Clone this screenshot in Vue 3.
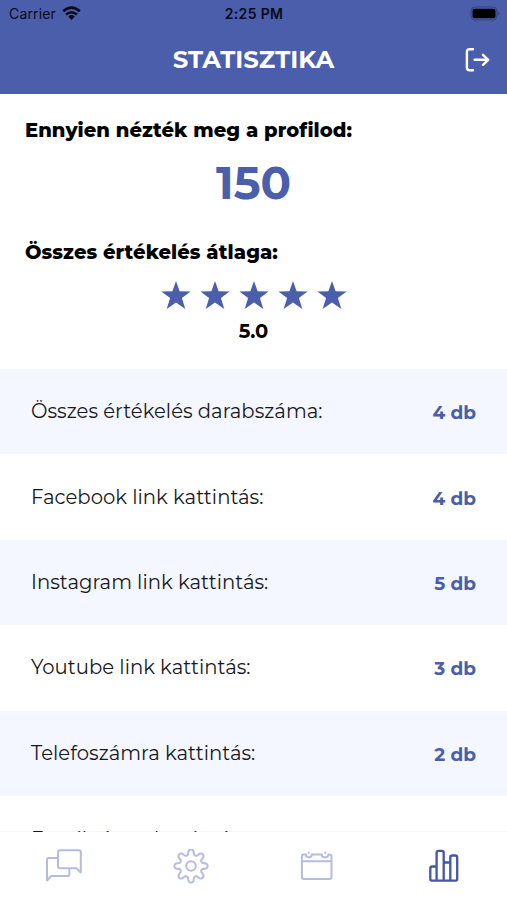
<script setup>
const rows = [
  { label: 'Összes értékelés darabszáma:', value: '4 db' },
  { label: 'Facebook link kattintás:', value: '4 db' },
  { label: 'Instagram link kattintás:', value: '5 db' },
  { label: 'Youtube link kattintás:', value: '3 db' },
  { label: 'Telefoszámra kattintás:', value: '2 db' },
  { label: 'Email címre kattintás:' },
]

// Eight-toothed gear outline built around the point (18, 17)
const gearPath = (() => {
  const pts = []
  const n = 192
  for (let i = 0; i < n; i++) {
    const t = (i / n) * Math.PI * 2
    const wave = Math.tanh(1.1 * Math.cos(8 * t)) / Math.tanh(1.1)
    const r = 13.9 + 2.7 * wave
    const a = t + 0.015 * Math.sin(16 * t)
    pts.push(`${(18 + r * Math.sin(a)).toFixed(2)} ${(17 - r * Math.cos(a)).toFixed(2)}`)
  }
  return `M${pts.join('L')}Z`
})()
</script>

<template>
  <div class="screen">
    <header class="header">
      <div class="status">
        <div class="carrier">
          <span>Carrier</span>
          <svg class="wifi" width="19" height="15" viewBox="0 0 19 15">
            <path d="M1.2 5.2Q9.5-2 17.8 5.2M4.1 8.5Q9.5 3.9 14.9 8.5" fill="none" stroke="#080a14" stroke-width="2.5" />
            <path d="M6.2 10.4Q9.5 7.8 12.8 10.4L9.5 14Z" fill="#080a14" />
          </svg>
        </div>
        <span class="time">2:25 PM</span>
        <svg class="battery" width="31" height="15" viewBox="0 0 31 15">
          <rect x="1" y="1" width="26" height="13" rx="4" fill="none" stroke="#35457f" stroke-width="1.2" />
          <rect x="2.5" y="2.7" width="23" height="9.6" rx="2" fill="#000" />
          <path d="M28.5 5.5Q30.5 7.5 28.5 9.5Z" fill="#35457f" />
        </svg>
      </div>
      <div class="titlebar">
        <h1>STATISZTIKA</h1>
        <svg class="logout" width="25" height="24" viewBox="0 0 25 24" fill="none" stroke="#fff" stroke-width="2.4" stroke-linecap="round" stroke-linejoin="round">
          <path d="M8 1.3H4.7Q1.9 1.3 1.9 4.1V19.4Q1.9 22.2 4.7 22.2H8M9.6 11.8H23M18 6.8L23.2 11.8L18 16.8" />
        </svg>
      </div>
    </header>

    <main class="content">
      <section class="summary">
        <h2 class="views-title">Ennyien nézték meg a profilod:</h2>
        <div class="views">150</div>
        <h2 class="rating-title">Összes értékelés átlaga:</h2>
        <div class="stars">
          <svg v-for="n in 5" :key="n" width="30" height="29" viewBox="0 0 30 29">
            <path d="M15 0L18.6 10.2L29.6 10.4L20.9 17.1L24.3 28L15 21.5L5.7 28L9.1 17.1L.4 10.4L11.4 10.2Z" fill="#4a5eac" />
          </svg>
        </div>
        <div class="rating">5.0</div>
      </section>
      <section>
        <div v-for="row in rows" :key="row.label" class="row">
          <span class="label">{{ row.label }}</span>
          <span v-if="row.value" class="value">{{ row.value }}</span>
        </div>
      </section>
    </main>

    <nav class="tabs">
      <div class="tab">
        <svg width="36" height="36" viewBox="0 0 36 36">
          <path d="M12 9H2.8Q1 9 1 11V31.5L5.2 27H21.6Q23.4 27 23.4 25.2V19.5M14 1.2H32.8Q34.8 1.2 34.8 3.2V23.5L30.3 19.2H14Q12 19.2 12 17.2V3.2Q12 1.2 14 1.2Z" />
        </svg>
      </div>
      <div class="tab">
        <svg width="36" height="36" viewBox="0 0 36 36">
          <path :d="gearPath" />
          <circle cx="18" cy="17" r="4.8" />
        </svg>
      </div>
      <div class="tab">
        <svg width="36" height="36" viewBox="0 0 36 36">
          <path d="M7 5.5H4.9Q2.9 5.5 2.9 7.5V28Q2.9 30 4.9 30H30.5Q32.5 30 32.5 28V7.5Q32.5 5.5 30.5 5.5H29.3M12.7 5.5H22.8M2.9 12.2H32.5M7 5.5C7 9.3 12.7 9.3 12.7 5.5M22.8 5.5C22.8 9.3 29.3 9.3 29.3 5.5M9.7 3.4V3.9M26.2 3.4V3.9" />
        </svg>
      </div>
      <div class="tab active">
        <svg width="36" height="36" viewBox="0 0 36 36">
          <path d="M10.6 17.5H6.3Q4.3 17.5 4.3 19.5V29.7Q4.3 31.7 6.3 31.7H29.2Q31.2 31.7 31.2 29.7V8.5Q31.2 6.5 29.2 6.5H26.3Q24.3 6.5 24.3 8.5V31.5M10.6 31.5V3.8Q10.6 1.8 12.6 1.8H15.7Q17.7 1.8 17.7 3.8V31.5M17.7 13.5H24.3" />
        </svg>
      </div>
    </nav>
  </div>
</template>

<style>
body {
  margin: 0;
  background: #fff;
}
</style>

<style scoped>
.screen {
  display: flex;
  flex-direction: column;
  width: 507px;
  height: 900px;
  overflow: hidden;
  background: #fff;
  color: #000;
  font-family: Montserrat, Inter, sans-serif;
}
.header {
  flex: none;
  height: 94px;
  background: #4a5eac;
}
.status {
  display: grid;
  grid-template-columns: 1fr auto 1fr;
  align-items: center;
  height: 27px;
  padding: 0 6px 0 9px;
  font-family: Inter, sans-serif;
  font-size: 14px;
  color: #080a14;
}
.carrier {
  display: flex;
  align-items: center;
  gap: 6px;
}
.carrier span {
  letter-spacing: 0.15px;
}
.time {
  padding-right: 2px;
  font-weight: 600;
  letter-spacing: 0.35px;
}
.battery {
  justify-self: end;
}
.titlebar {
  display: grid;
  grid-template-columns: 1fr auto 1fr;
  align-items: center;
  height: 66px;
  padding: 0 17px;
}
h1 {
  grid-column: 2;
  margin: 0;
  padding-bottom: 2px;
  color: #fff;
  font-size: 24.4px;
  font-weight: 700;
  line-height: 30px;
}
.logout {
  justify-self: end;
}
.content {
  flex: 1;
  min-height: 0;
  overflow: hidden;
  box-shadow: inset 0 -1px #f8f8fa;
}
.summary {
  display: flex;
  flex-direction: column;
  height: 275px;
}
h2 {
  margin: 0 0 0 25px;
  font-size: 19.5px;
  font-weight: 800;
  line-height: 24px;
  letter-spacing: 0.08px;
  white-space: nowrap;
  font-variant-ligatures: none;
}
.views-title {
  margin-top: 24px;
}
.views {
  margin-top: 14px;
  color: #4a5eac;
  font-size: 45px;
  font-weight: 700;
  line-height: 54px;
  text-align: center;
}
.rating-title {
  margin-top: 30px;
}
.stars {
  display: flex;
  justify-content: center;
  gap: 9px;
  margin-top: 17px;
}
.rating {
  margin-top: 9px;
  font-size: 19.5px;
  font-weight: 700;
  line-height: 24px;
  text-align: center;
}
.row {
  display: flex;
  justify-content: space-between;
  align-items: center;
  height: 85.4px;
  padding: 0 31px;
  box-sizing: border-box;
}
.row:nth-child(odd) {
  background: #f4f7ff;
}
.label {
  padding-bottom: 1px;
  color: #17181b;
  font-size: 19.6px;
  font-weight: 400;
  letter-spacing: 0.03px;
  white-space: nowrap;
}
.row:last-child .label {
  padding: 0;
}
.value {
  padding-top: 2px;
  color: #4a5eac;
  font-size: 18.5px;
  font-weight: 700;
}
.tabs {
  flex: none;
  display: grid;
  grid-template-columns: repeat(4, 1fr);
  height: 68px;
  background: #fff;
}
.tab {
  display: flex;
  justify-content: center;
  padding: 17px 0 0 1px;
}
.tab svg {
  fill: none;
  stroke: #b4bcdf;
  stroke-width: 2;
  stroke-linecap: round;
  stroke-linejoin: round;
}
.active svg {
  stroke: #4456a6;
  stroke-width: 2.3;
}
</style>
